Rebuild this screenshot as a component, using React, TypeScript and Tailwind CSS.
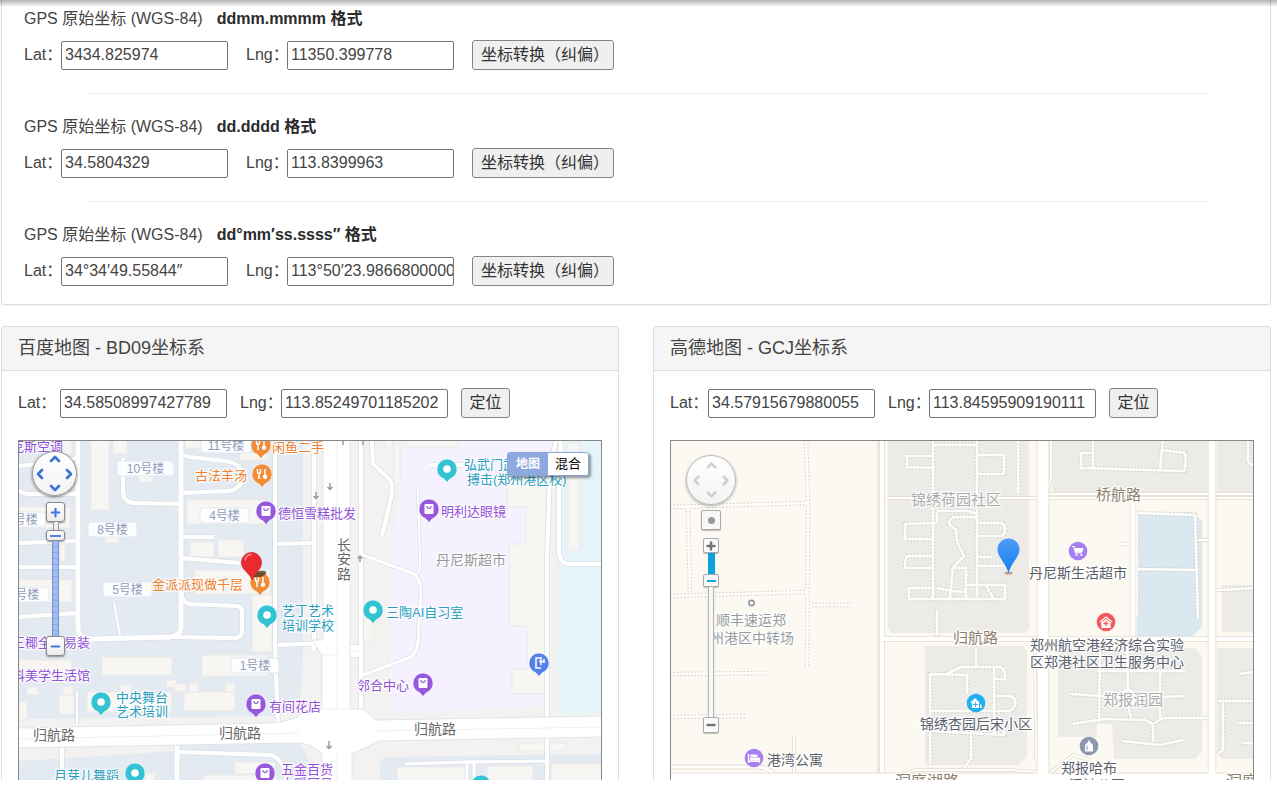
import { useId, type ReactNode } from "react";
import { ChevronDown, ChevronLeft, ChevronRight, ChevronUp, Minus, Plus } from "lucide-react";

const FIELD =
  "h-[29px] w-[167px] rounded-[2px] border border-[#767676] bg-white pl-[3px] text-base text-[#444]";
const BUTTON =
  "h-[30px] rounded-[3px] border border-[#858585] bg-[#efefef] text-base whitespace-nowrap text-[#333]";

function Field({ label, value, labelClass }: { label: string; value: string; labelClass: string }) {
  const id = useId();
  return (
    <div className="flex items-center">
      <label htmlFor={id} className={`whitespace-nowrap ${labelClass}`}>
        {label}
      </label>
      <input id={id} type="text" defaultValue={value} className={FIELD} />
    </div>
  );
}

const FORMATS = [
  { name: "ddmm.mmmm 格式", lat: "3434.825974", lng: "11350.399778" },
  { name: "dd.dddd 格式", lat: "34.5804329", lng: "113.8399963" },
  { name: "dd°mm′ss.ssss″ 格式", lat: "34°34′49.55844″", lng: "113°50′23.9866800000" },
];

function FormatRow({ name, lat, lng }: { name: string; lat: string; lng: string }) {
  return (
    <div className="flex flex-col gap-[9px]">
      <p className="leading-6">
        GPS 原始坐标 (WGS-84)
        <strong className="ml-[14px] font-bold text-[#2b2b2b]">{name}</strong>
      </p>
      <div className="flex items-center gap-[18px]">
        <Field label="Lat：" value={lat} labelClass="w-[37px]" />
        <Field label="Lng：" value={lng} labelClass="w-[41px]" />
        <button type="button" className={`w-[142px] pl-2 text-left ${BUTTON}`}>
          坐标转换（纠偏）
        </button>
      </div>
    </div>
  );
}

function MapPanel({
  title,
  lat,
  lng,
  latClass,
  children,
}: {
  title: string;
  lat: string;
  lng: string;
  latClass: string;
  children: ReactNode;
}) {
  return (
    <section className="min-w-0 flex-1 rounded-t border border-b-0 border-[#ddd] bg-white">
      <h3 className="rounded-t border-b border-[#ddd] bg-[#f5f5f5] px-4 py-2 text-lg leading-[27px]">{title}</h3>
      <div className="px-4 pt-[17px]">
        <div className="mb-[22px] flex items-center gap-[13px]">
          <Field label="Lat：" value={lat} labelClass={latClass} />
          <Field label="Lng：" value={lng} labelClass="w-[41px]" />
          <button type="button" className={`w-[49px] ${BUTTON}`}>
            定位
          </button>
        </div>
        <div className="relative h-[340px] overflow-hidden border border-b-0 border-[#888]">{children}</div>
      </div>
    </section>
  );
}

type Road = [d: string, width: number];

function Roads({ list, edge }: { list: Road[]; edge: string }) {
  return (
    <g fill="none" strokeLinejoin="round">
      {list.map(([d, w]) => (
        <path key={`e${d}`} d={d} stroke={edge} strokeWidth={w + 1.5} />
      ))}
      {list.map(([d, w]) => (
        <path key={d} d={d} stroke="#fff" strokeWidth={w} />
      ))}
    </g>
  );
}

function Label({
  x,
  y,
  color,
  size = 13,
  anchor = "start",
  children,
}: {
  x: number;
  y: number;
  color: string;
  size?: number;
  anchor?: "start" | "middle";
  children: string;
}) {
  return (
    <text
      x={x}
      y={y}
      fill={color}
      fontSize={size}
      textAnchor={anchor}
      stroke="#fff"
      strokeOpacity="0.85"
      strokeWidth="2.5"
      strokeLinejoin="round"
      paintOrder="stroke"
    >
      {children}
    </text>
  );
}

const PURPLE = "#9250d8";
const ORANGE = "#ee8130";
const TEAL = "#2a9fbe";

function Pin({ x, y, kind }: { x: number; y: number; kind: "dot" | "bag" | "food" | "gate" }) {
  const fill = { dot: "#33c3d3", bag: "#9659dc", food: "#f18d38", gate: "#5581ea" }[kind];
  return (
    <g transform={`translate(${x} ${y})`}>
      <path d="M-10 0a10 10 0 1 1 20 0c0 5-3 8-6 9.300C2 10.500 1.500 12 0 13.500-1.500 12-2 10.500-4 9.300-7 8-10 5-10 0z" fill={fill} stroke="#fff" strokeOpacity=".7" strokeWidth=".8" />
      {kind === "dot" && <circle r="3.800" fill="#fff" />}
      {kind === "bag" && (
        <>
          <rect x="-4.500" y="-5" width="9" height="10" rx="1.200" fill="#fff" />
          <path d="M-2.200-3c0 3.200 4.400 3.200 4.400 0" fill="none" stroke={fill} strokeWidth="1.100" />
        </>
      )}
      {kind === "food" && (
        <path d="M-4.500-5v3c0 2 3 2 3 0v-3M-3-1V5M3-5v6" fill="none" stroke="#fff" strokeWidth="1.500" />
      )}
      {kind === "food" && <circle cx="3" cy="2.800" r="2.200" fill="#fff" />}
      {kind === "gate" && (
        <path d="M3-5h-6v10h5M0-1.500h5M2-4v6M5-4v4" fill="none" stroke="#fff" strokeWidth="1.500" />
      )}
    </g>
  );
}

const BAIDU_BUILDINGS: [number, number, number, number][] = [
  [91, 440, 18, 70], [113, 440, 14, 14], [139, 470, 14, 12], [187, 500, 80, 24], [190, 542, 24, 15],
  [218, 540, 26, 17], [105, 535, 14, 8], [240, 453, 28, 7], [185, 440, 17, 8], [60, 440, 12, 15],
  [19, 507, 51, 21], [60, 543, 5, 18], [195, 570, 75, 24], [252, 595, 20, 57], [102, 657, 70, 18],
  [202, 655, 67, 21], [19, 580, 53, 22], [19, 660, 53, 13], [87, 692, 85, 20], [184, 692, 51, 19],
  [59, 695, 15, 19], [63, 686, 10, 9], [27, 687, 11, 8], [19, 702, 8, 18], [166, 680, 10, 7],
  [174, 684, 12, 7], [189, 683, 10, 9], [225, 683, 10, 9], [120, 685, 11, 7], [203, 775, 74, 8],
  [235, 762, 40, 12], [385, 440, 8, 7], [406, 440, 52, 7], [394, 445, 6, 39], [363, 600, 11, 42],
  [568, 443, 11, 107], [145, 773, 10, 8],
];

const BAIDU_ROADS: Road[] = [
  ["M78 440V625Q77 640 92 639L170 637Q180 636 181 628V440", 5],
  ["M170 637L236 638Q242 637 242 630V612Q242 606 236 606L190 604Q181 602 181 590", 4],
  ["M114 602L120 636", 2],
  ["M123 458V492Q124 503 134 503L181 504", 4],
  ["M181 452Q181 456 190 457L225 461Q243 464 243 476Q241 490 228 491L181 493", 4],
  ["M181 537H214", 4],
  ["M181 558L240 563", 4],
  ["M18 466L45 463L78 458", 4],
  ["M18 490Q22 494 30 494H78", 4],
  ["M18 543L78 541", 4],
  ["M18 567H78", 4],
  ["M18 617L78 613", 4],
  ["M77 692V725", 2],
  ["M275 440V645L278 725", 4],
  ["M276 544L314 543", 4],
  ["M314 440V650", 4],
  ["M278 645L325 643", 4],
  ["M361 440V712", 4],
  ["M361 651H345", 12],
  ["M372 440L373 464L390 480Q394 486 391 498L382 536", 4],
  ["M418 490L420 560Q420 574 416 575", 2],
  ["M363 555L414 574Q421 580 421 593L418 642Q417 652 411 657L363 675", 3],
  ["M430 465H463", 4],
  ["M556 440Q549 470 549 500L547 560V780", 4],
  ["M559 440Q563 445 559 456V553Q560 564 570 564H602", 4],
  ["M62 745V780", 4],
  ["M177 742V780", 5],
  ["M178 752L270 755Q284 758 286 780", 4],
  ["M405 764L467 762L547 761", 3],
  ["M467 780V762H474V780", 3],
];

const TAGS: [string, number, number, number][] = [
  ["10号楼", 117, 461, 57], ["4号楼", 200, 508, 49], ["8号楼", 88, 522, 49], ["5号楼", 103, 582, 49],
  ["1号楼", 231, 658, 48], ["11号楼", 201, 438, 50], ["9号楼", -1, 512, 47], ["7号楼", -1, 587, 50],
];

function BaiduMap() {
  return (
    <svg viewBox="19 441 582 339" preserveAspectRatio="xMidYMin slice" className="block h-full w-full" role="img" aria-label="百度地图">
      <rect x="19" y="441" width="582" height="340" fill="#e4eaf2" />
      <path d="M303 440H602V754L388 757Q380 757 380 765V780H322L300 744V700L303 660z" fill="#f3f2f0" />
      <path d="M19 719L277 716L303 705V730H19zM19 745L177 742V751L19 761zM303 740L322 752V780L308 760z" fill="#f3f2f0" />
      <path d="M404 440H550L548 706L390 714V560L395 530z" fill="#f5f1fe" />
      <path d="M557 440H602V714H557z" fill="#e6f4fa" />
      <path d="M507 483V507H526V544H509V626H527V669H512V694H546V470H507z" fill="#f7f6f3" stroke="#ebe9e6" />
      <g fill="#f7f6f3" stroke="#ebe9e6" strokeWidth=".8">
        {BAIDU_BUILDINGS.map(([x, y, w, h]) => (
          <rect key={`${x}-${y}`} x={x} y={y} width={w} height={h} />
        ))}
        <path d="M397 767H466V785H397zM487 766H533V785H487zM551 764H603V785H551zM519 743H566V751H519z" />
      </g>
      <Roads list={BAIDU_ROADS} edge="#dcdfe3" />
      <path d="M18 728L270 723Q292 722 303 713L322 709V655L312 640H323V440H350V709H363L376 720L602 716V737L380 741L352 754V781H322V754Q315 745 300 743L290 743L18 748z" fill="#fff" stroke="#e2e4e8" />
      <g fill="none" stroke="#edeff2" strokeWidth="1">
        <path d="M337 440V709M323 655H337M323 709H350M376 731L602 727M19 739L300 733M337 754V780M351 651H358M351 668H358" />
      </g>
      <g fill="none" stroke="#9a9ca3" strokeWidth="1.500">
        <path d="M330 483V489M327.500 487L330 489.500L332.500 487M316 492V498M313.500 496L316 498.500L318.500 496M360 562V556M357.500 558.500L360 556L362.500 558.500M329 741V748M326.500 746L329 748.500L331.500 746M343 440V445M363 440V445" />
      </g>

      {TAGS.map(([name, x, y, w]) => (
        <g key={name}>
          <rect x={x} y={y} width={w} height="15" rx="3" fill="#fff" fillOpacity=".88" stroke="#e1e7f3" />
          <text x={x + w / 2} y={y + 12} fontSize="12" textAnchor="middle" fill="#909bbb">
            {name}
          </text>
        </g>
      ))}

      <Label x={436} y={565} size={14} color="#999">丹尼斯超市</Label>
      <Label x={33} y={740} size={14} color="#666">归航路</Label>
      <Label x={219} y={738} size={14} color="#666">归航路</Label>
      <Label x={414} y={734} size={14} color="#666">归航路</Label>
      <Label x={337} y={550} size={14} color="#666">长</Label>
      <Label x={337} y={564} size={14} color="#666">安</Label>
      <Label x={337} y={579} size={14} color="#666">路</Label>

      <Label x={11} y={451} color={PURPLE}>克斯空调</Label>
      <Label x={12} y={647} color={PURPLE}>三椰全屋易装</Label>
      <Label x={12} y={680} color={PURPLE}>科美学生活馆</Label>
      <Label x={278} y={518} color={PURPLE}>德恒雪糕批发</Label>
      <Label x={441} y={516} color={PURPLE}>明利达眼镜</Label>
      <Label x={269} y={711} color={PURPLE}>有间花店</Label>
      <Label x={357} y={690} color={PURPLE}>邻合中心</Label>
      <Label x={281} y={774} color={PURPLE}>五金百货</Label>
      <Label x={281} y={788} color={PURPLE}>水暖厨具</Label>
      <Label x={272} y={452} color={ORANGE}>闲鱼二手</Label>
      <Label x={195} y={480} color={ORANGE}>古法羊汤</Label>
      <Label x={152} y={589} color={ORANGE}>金派派现做千层</Label>
      <Label x={464} y={469} color={TEAL}>弘武门武道</Label>
      <Label x={467} y={484} color={TEAL}>搏击(郑州港区校)</Label>
      <Label x={386} y={617} color={TEAL}>三陶AI自习室</Label>
      <Label x={282} y={615} color={TEAL}>艺丁艺术</Label>
      <Label x={282} y={630} color={TEAL}>培训学校</Label>
      <Label x={116} y={702} color={TEAL}>中央舞台</Label>
      <Label x={116} y={716} color={TEAL}>艺术培训</Label>
      <Label x={54} y={780} color={TEAL}>月芽儿舞蹈</Label>

      <Pin x={101} y={702} kind="dot" />
      <Pin x={267} y={615} kind="dot" />
      <Pin x={373} y={610} kind="dot" />
      <Pin x={447} y={469} kind="dot" />
      <Pin x={135} y={773} kind="dot" />
      <Pin x={481} y={785} kind="dot" />
      <Pin x={262} y={474} kind="food" />
      <Pin x={261} y={445} kind="food" />
      <Pin x={260} y={582} kind="food" />
      <Pin x={266} y={511} kind="bag" />
      <Pin x={429} y={509} kind="bag" />
      <Pin x={256} y={704} kind="bag" />
      <Pin x={423} y={683} kind="bag" />
      <Pin x={265} y={773} kind="bag" />
      <Pin x={539} y={663} kind="gate" />

      <ellipse cx="259" cy="574" rx="7.500" ry="3" fill="#443322" fillOpacity=".75" transform="rotate(-12 259 574)" />
      <path d="M252 580C250 573 241.500 570 241.500 562.500a10 10 0 0 1 20 0C261.500 570 254 573 252 580z" fill="#ea2a30" stroke="#c91f27" strokeWidth=".8" />
      <path d="M245 560Q246 555 251 554.500" fill="none" stroke="#ff8a8a" strokeWidth="1.500" strokeLinecap="round" />
    </svg>
  );
}

const AMAP_STREETS: Road[] = [
  ["M887 498H1254", 2],
  ["M1049 494H1254", 2],
  ["M882 440V774", 4],
  ["M878 440V774", 1],
  ["M1133 503V636", 5],
  ["M882 639H1254", 4],
  ["M794 737V774", 2],
  ["M670 767H755Q768 767 774 774", 3],
  ["M1198 540H1209", 2],
  ["M1122 544H1130", 2],
  ["M1216 590H1222", 2],
  ["M1051 440V478L1047 495", 2],
  ["M1035 640L1036 760L1044 774M1050 773L1073 755L1090 760", 2],
  ["M900 775L915 770H1010L1040 772", 2],
];

const AMAP_LANES = [
  "M806 440L808 502L807 667",
  "M670 507L808 503",
  "M688 507L690 593",
  "M670 596L807 592",
  "M812 605H851",
  "M670 674L768 673",
  "M670 717L745 716",
  "M933 440V600",
  "M933 456H907V467L933 468",
  "M933 445H977",
  "M937 523L905 524V539H933",
  "M933 556H908Q905 556 905 568H933",
  "M935 588H909V599H1005V585H967M937 588L952 591L965 592",
  "M977 440V597",
  "M977 455H1004V474H977",
  "M1018 440V494",
  "M978 523H1000Q1005 523 1005 529Q1005 536 1000 536H978",
  "M937 523V513L938 511H968L977 514",
  "M977 517H955Q949 518 949 524L956 530L957 542L964 556L953 568L950 598",
  "M953 568H966V599M978 566H1005M978 557H992M986 585L993 598",
  "M1093 440V469M1093 453H1081V468L1184 471Q1187 462 1185 453L1162 450M1163 440L1160 469",
  "M1248 440V462L1254 466",
  "M1138 513L1195 515L1198 618M1137 515V617M1137 569L1197 570",
  "M1222 590L1254 588",
  "M930 769V674L967 675V694M947 674L960 667L1000 667Q1006 670 1005 679H993",
  "M976 648V666M994 667V735M930 711H1010Q1016 708 1015 700Q1014 696 1008 696H994M930 731L1004 735V728M971 735V758L963 770",
  "M937 610V636",
  "M1100 652L1099 720M1097 671H1185M1127 650L1128 690M1128 705L1131 718M1070 694L1120 697M1137 698L1185 696M1160 671V718",
  "M1072 724L1105 719L1145 720L1153 724L1163 718H1208M1153 724V742M1122 741L1160 745L1183 740",
  "M1128 690a7 7 0 1 0 .1 0",
  "M1217 701H1254M1223 703V750L1218 754M1239 674L1254 672M1238 723H1254M1243 743H1254",
];

const SLATE = "#5b616c";

function AmapMap() {
  return (
    <svg viewBox="671 441 582 339" preserveAspectRatio="xMidYMin slice" className="block h-full w-full" role="img" aria-label="高德地图">
      <rect x="671" y="441" width="582" height="340" fill="#fcf9f2" />
      <g fill="#ecebe7">
        <path d="M888 440H1029V628L1026 633H892L888 628z" />
        <path d="M925 646H1022L1027 651V757L1018 765H925z" />
        <path d="M1050 440H1208V494H1054L1050 480zM1217 440H1254V494H1217z" />
        <path d="M1058 648H1195L1202 656V752L1195 759H1114L1112 724H1097V737H1058z" />
        <path d="M1222 585H1254V632H1222zM1217 648H1254V759H1222L1217 754z" />
      </g>
      <path d="M1137 514L1192 512L1202 521V627L1193 636H1137z" fill="#dae8ef" />
      <g fill="none" strokeLinejoin="round">
        {AMAP_LANES.map((d) => (
          <path key={`e${d}`} d={d} stroke="#cfccc3" strokeWidth="4.500" strokeDasharray="1.500 2" />
        ))}
        {AMAP_LANES.map((d) => (
          <path key={d} d={d} stroke="#fefdfb" strokeWidth="2.600" />
        ))}
      </g>
      <Roads list={AMAP_STREETS} edge="#e3dacb" />
      <Roads
        list={[
          ["M670 777H1254", 7],
          ["M1043 440V781", 11],
          ["M1212 440V781", 7],
        ]}
        edge="#e3dacb"
      />

      <Label x={911} y={505} size={15} color="#ababab">锦绣荷园社区</Label>
      <Label x={1103} y={705} size={15} color="#ababab">郑报润园</Label>
      <Label x={1096} y={500} size={15} color="#8e8070">桥航路</Label>
      <Label x={953} y={643} size={15} color="#8e8070">归航路</Label>
      <Label x={895} y={787} size={16} color="#8e8070">洞庭湖路</Label>
      <Label x={1226} y={787} size={16} color="#8e8070">洞庭湖路</Label>
      <Label x={716} y={625} size={14} color="#979ba2">顺丰速运郑</Label>
      <Label x={752} y={643} size={14} anchor="middle" color="#979ba2">州港区中转场</Label>
      <Label x={767} y={765} size={14} color={SLATE}>港湾公寓</Label>
      <Label x={1078} y={578} size={14} anchor="middle" color={SLATE}>丹尼斯生活超市</Label>
      <Label x={1107} y={650} size={14} anchor="middle" color={SLATE}>郑州航空港经济综合实验</Label>
      <Label x={1107} y={667} size={14} anchor="middle" color={SLATE}>区郑港社区卫生服务中心</Label>
      <Label x={976} y={729} size={14} anchor="middle" color={SLATE}>锦绣杏园后宋小区</Label>
      <Label x={1089} y={773} size={14} anchor="middle" color={SLATE}>郑报哈布</Label>
      <Label x={1097} y={790} size={14} anchor="middle" color={SLATE}>湿地公园</Label>

      <circle cx="751.500" cy="603" r="2.600" fill="#fff" stroke="#8c939c" strokeWidth="1.600" />

      <g transform="translate(1078 551)">
        <circle r="9.300" fill="#a67ff0" />
        <path d="M-6-4.500h2l1.500 6.500h6" fill="none" stroke="#fff" strokeWidth="1.200" />
        <path d="M-3.500-3h9l-1.200 4.500h-7z" fill="#fff" />
        <circle cx="-1.500" cy="4" r="1.100" fill="#fff" />
        <circle cx="3.500" cy="4" r="1.100" fill="#fff" />
      </g>
      <g transform="translate(1106 622)">
        <circle r="9.300" fill="#f4585c" />
        <path d="M-6 0L0-5L6 0M-4 0V5.300H4V0" fill="none" stroke="#fff" strokeWidth="1.300" />
        <path d="M-4 0L0-3L4 0V5H-4z" fill="#fff" />
        <path d="M0-1V4M-2.500 1.500H2.500" stroke="#f4585c" strokeWidth="1.300" />
      </g>
      <g transform="translate(976 703)">
        <circle r="9.300" fill="#22b0ee" />
        <path d="M-6 0L-1-5L4 0H3V5H-4V0zM4 1.500H5.500V5H4z" fill="#fff" />
        <path d="M-.5-1V4M-3 1.500H2" stroke="#22b0ee" strokeWidth=".9" />
      </g>
      <g transform="translate(1089 746)">
        <circle r="9.300" fill="#8d97ae" />
        <path d="M-4-1L-1.500-3.500L0-6L1.500-3.500L4-1V5.500H-4z" fill="#fff" />
        <path d="M-2-.5V4" stroke="#8d97ae" strokeWidth="1" />
      </g>
      <g transform="translate(754 758)">
        <circle r="9.300" fill="#a67ff0" />
        <path d="M-5.500-4V5M-5.500 3.200H5.500M5.500 0V5" stroke="#fff" strokeWidth="1.400" />
        <rect x="-4" y="-.5" width="9.500" height="3" fill="#fff" />
        <rect x="-3.500" y="-3.500" width="7" height="2.400" fill="#fff" />
      </g>

      <ellipse cx="1008.500" cy="573" rx="4" ry="1.500" fill="#b99f96" />
      <path d="M1008.500 573C1006 563 997.500 557 997.500 549.500a11 11 0 0 1 22 0C1019.500 557 1011 563 1008.500 573z" fill="url(#markerBlue)" />
      <defs>
        <linearGradient id="markerBlue" x1="0" y1="0" x2="0" y2="1">
          <stop offset="0" stopColor="#4f9cf8" />
          <stop offset="1" stopColor="#1480f0" />
        </linearGradient>
      </defs>
    </svg>
  );
}

function PanPad({ className, iconClass, size }: { className: string; iconClass: string; size: number }) {
  const arrow = "flex h-4 w-4 items-center justify-center";
  return (
    <div className={`absolute grid grid-cols-3 grid-rows-3 place-items-center rounded-full bg-linear-to-b from-white to-[#f3f3f3] ${className}`}>
      <button type="button" aria-label="向上平移" className={`col-start-2 row-start-1 ${arrow}`}>
        <ChevronUp size={size} strokeWidth={4} className={iconClass} />
      </button>
      <button type="button" aria-label="向左平移" className={`col-start-1 row-start-2 ${arrow}`}>
        <ChevronLeft size={size} strokeWidth={4} className={iconClass} />
      </button>
      <button type="button" aria-label="向右平移" className={`col-start-3 row-start-2 ${arrow}`}>
        <ChevronRight size={size} strokeWidth={4} className={iconClass} />
      </button>
      <button type="button" aria-label="向下平移" className={`col-start-2 row-start-3 ${arrow}`}>
        <ChevronDown size={size} strokeWidth={4} className={iconClass} />
      </button>
    </div>
  );
}

function BaiduControls() {
  const key =
    "flex w-[19px] items-center justify-center rounded-[3px] border border-[#8a8a8a] bg-linear-to-b from-white to-[#ececec] text-[#3f79e0] shadow-[0_1px_2px_rgba(0,0,0,0.4)]";
  return (
    <>
      <PanPad
        className="top-[10px] left-[13px] h-[45px] w-[45px] border border-[#999] shadow-[0_1px_3px_rgba(0,0,0,0.5)]"
        iconClass="shrink-0 text-[#3f73d8]"
        size={16}
      />
      <div className="absolute top-[61px] left-[27px] flex flex-col items-center">
        <button type="button" aria-label="放大" className={`h-[20px] ${key}`}>
          <Plus size={13} strokeWidth={4} />
        </button>
        <div className="h-2 w-[6px] border-x border-[#999] bg-[#eee]" />
        <div className={`h-[11px] ${key}`}>
          <div className="h-[2px] w-[11px] bg-[#4f86e6]" />
        </div>
        <div className="h-[95px] w-[7px] border-x border-[#8593b0] bg-[repeating-linear-gradient(#9cbcfa_0_5px,#86a9ec_5px_6px)]" />
        <button type="button" aria-label="缩小" className={`h-[20px] ${key}`}>
          <Minus size={13} strokeWidth={4} />
        </button>
        <input type="range" aria-label="缩放级别" className="absolute top-[22px] h-[110px] w-[19px] cursor-pointer opacity-0 [writing-mode:vertical-lr]" />
      </div>
      <div className="absolute top-[11px] right-[12px] flex h-[24px] rounded-[3px] border border-[#8ba4dc] bg-white text-xs shadow-[2px_2px_3px_rgba(0,0,0,0.4)]">
        <button type="button" className="w-10 bg-[#8ea8e0] font-bold text-white">
          地图
        </button>
        <button type="button" className="w-10 rounded-r-[3px] bg-white text-[13px] text-black">
          混合
        </button>
      </div>
    </>
  );
}

function AmapControls() {
  const key =
    "flex w-4 items-center justify-center rounded-[2px] border border-[#aaa] bg-[#fafafa] text-[#777] shadow-[0_1px_1px_rgba(0,0,0,0.25)]";
  return (
    <>
      <PanPad
        className="top-[14px] left-[15px] h-[50px] w-[50px] border border-[#bbb] px-[2px] py-[2px] shadow-[0_1px_3px_rgba(0,0,0,0.35)]"
        iconClass="shrink-0 text-[#cecece]"
        size={15}
      />
      <button
        type="button"
        aria-label="回到中心"
        className="absolute top-[69px] left-[30px] flex h-5 w-5 items-center justify-center rounded-[2px] border border-[#aaa] bg-[#f7f7f7] shadow-[0_1px_1px_rgba(0,0,0,0.25)]"
      >
        <span className="h-[7px] w-[7px] rounded-full bg-[#999]" />
      </button>
      <div className="absolute top-[97px] left-[32px] flex flex-col items-center">
        <button type="button" aria-label="放大" className={`h-[15px] ${key}`}>
          <Plus size={12} strokeWidth={5} />
        </button>
        <div className="h-[21px] w-[7px] bg-[#0da2dc]" />
        <div className={`h-[13px] ${key} border-[#7a9bab]`}>
          <div className="h-[2px] w-[9px] bg-[#0da8e0]" />
        </div>
        <div className="h-[130px] w-[6px] border-x border-[#b5b5b5] bg-[#f7f7f7] shadow-sm" />
        <button type="button" aria-label="缩小" className={`h-[16px] ${key}`}>
          <Minus size={12} strokeWidth={5} />
        </button>
        <input type="range" aria-label="缩放级别" className="absolute top-4 h-[160px] w-4 cursor-pointer opacity-0 [writing-mode:vertical-lr]" />
      </div>
    </>
  );
}

export default function App() {
  return (
    <main
      lang="zh-CN"
      className="relative bg-white pr-[6px] pb-2 pl-px font-['Liberation_Sans','Noto_Sans_CJK_SC',sans-serif] text-base text-[#444]"
    >
      <div className="pointer-events-none absolute inset-x-0 top-0 z-10 h-[7px] bg-linear-to-b from-black/30 to-transparent" />

      <section className="rounded-b border border-t-0 border-[#ddd] pt-[7px] pb-[18px] pl-[22px] shadow-[0_1px_1px_rgba(0,0,0,0.05)]">
        {FORMATS.map((format, index) => (
          <div key={format.name}>
            {index > 0 && <hr className="mx-[62px] mt-[23px] mb-[21px] border-[#eee]" />}
            <FormatRow {...format} />
          </div>
        ))}
      </section>

      <div className="mt-[21px] flex gap-[34px]">
        <MapPanel title="百度地图 - BD09坐标系" lat="34.58508997427789" lng="113.85249701185202" latClass="w-[42px]">
          <BaiduMap />
          <BaiduControls />
        </MapPanel>
        <MapPanel title="高德地图 - GCJ坐标系" lat="34.57915679880055" lng="113.84595909190111" latClass="w-[38px]">
          <AmapMap />
          <AmapControls />
        </MapPanel>
      </div>
    </main>
  );
}
